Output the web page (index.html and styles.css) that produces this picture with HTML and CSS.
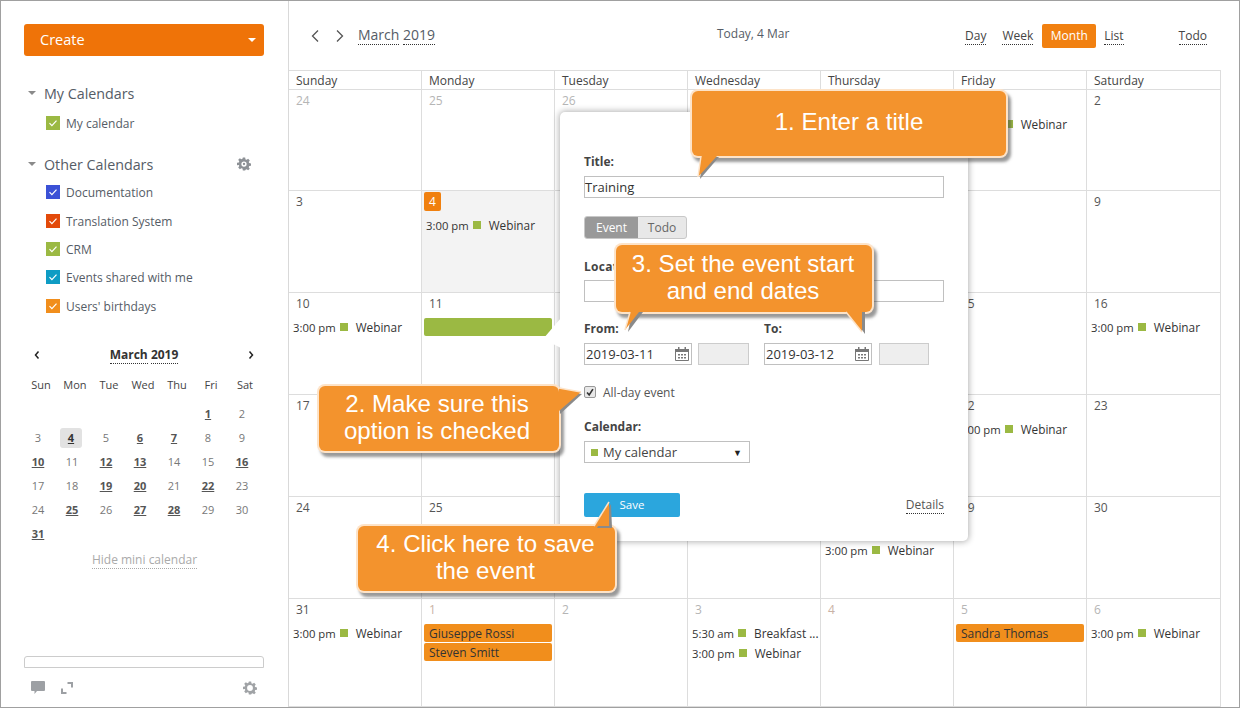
FILE: index.html
```html
<!DOCTYPE html>
<html lang="en">
<head>
<meta charset="utf-8">
<title>Calendar</title>
<link rel="stylesheet" href="styles.css">
</head>
<body>
<div class="app">
  <aside class="sidebar">
    <button class="create"><span>Create</span><i class="caret-white"></i></button>

    <div class="group-head first"><i class="caret"></i><span>My Calendars</span></div>
    <div class="cal-item first-item"><span class="check green"><svg viewBox="0 0 14 14"><path d="M3.5 7.2l2.4 2.4 4.6-5"/></svg></span>My calendar</div>

    <div class="group-head second"><i class="caret"></i><span>Other Calendars</span>
      <svg class="gear gear-top" viewBox="0 0 24 24"><path fill-rule="evenodd" d="M10 1h4l.6 3.1 1.9.8 2.6-1.8 2.8 2.8-1.8 2.6.8 1.9 3.1.6v4l-3.1.6-.8 1.9 1.8 2.6-2.8 2.8-2.6-1.8-1.9.8L14 23h-4l-.6-3.1-1.9-.8-2.6 1.8-2.8-2.8 1.8-2.6-.8-1.9L0 14v-4l3.1-.6.8-1.9L2.1 4.9l2.8-2.8 2.6 1.8 1.9-.8zM12 7.5a4.5 4.5 0 1 0 0 9 4.5 4.5 0 0 0 0-9zM12 10a2 2 0 1 1 0 4 2 2 0 0 1 0-4z"/></svg>
    </div>
    <div class="cal-item o1"><span class="check blue"><svg viewBox="0 0 14 14"><path d="M3.5 7.2l2.4 2.4 4.6-5"/></svg></span>Documentation</div>
    <div class="cal-item o2"><span class="check red"><svg viewBox="0 0 14 14"><path d="M3.5 7.2l2.4 2.4 4.6-5"/></svg></span>Translation System</div>
    <div class="cal-item o3"><span class="check green"><svg viewBox="0 0 14 14"><path d="M3.5 7.2l2.4 2.4 4.6-5"/></svg></span>CRM</div>
    <div class="cal-item o3"><span class="check teal"><svg viewBox="0 0 14 14"><path d="M3.5 7.2l2.4 2.4 4.6-5"/></svg></span>Events shared with me</div>
    <div class="cal-item o2"><span class="check orange"><svg viewBox="0 0 14 14"><path d="M3.5 7.2l2.4 2.4 4.6-5"/></svg></span>Users' birthdays</div>

    <div class="mini">
      <div class="mini-nav">
        <svg class="mini-arrow" viewBox="0 0 8 10"><path d="M5.5 1.5L2.5 5l3 3.5"/></svg>
        <div class="mini-title"><span>March</span> <span>2019</span></div>
        <svg class="mini-arrow" viewBox="0 0 8 10"><path d="M2.5 1.5l3 3.5-3 3.5"/></svg>
      </div>
      <div class="mini-dow"><span>Sun</span><span>Mon</span><span>Tue</span><span>Wed</span><span>Thu</span><span>Fri</span><span>Sat</span></div>
      <div class="mini-grid">
        <span></span><span></span><span></span><span></span><span></span><span class="b">1</span><span>2</span>
        <span>3</span><span class="b today">4</span><span>5</span><span class="b">6</span><span class="b">7</span><span>8</span><span>9</span>
        <span class="b">10</span><span>11</span><span class="b">12</span><span class="b">13</span><span>14</span><span>15</span><span class="b">16</span>
        <span>17</span><span>18</span><span class="b">19</span><span class="b">20</span><span>21</span><span class="b">22</span><span>23</span>
        <span>24</span><span class="b">25</span><span>26</span><span class="b">27</span><span class="b">28</span><span>29</span><span>30</span>
        <span class="b">31</span>
      </div>
      <div class="hide-mini"><span>Hide mini calendar</span></div>
    </div>

    <div class="side-bottom">
      <div class="side-box"></div>
      <div class="side-icons">
        <svg class="i-chat" viewBox="0 0 14 13"><path d="M1 0h12a1 1 0 0 1 1 1v8a1 1 0 0 1-1 1H6l-2.500 3V10H1a1 1 0 0 1-1-1V1a1 1 0 0 1 1-1z"/></svg>
        <svg class="i-expand" viewBox="0 0 12 12"><path d="M6.500 1H11V5.500M1 6.500V11H5.500"/></svg>
        <svg class="gear i-gear" viewBox="0 0 24 24"><path fill-rule="evenodd" d="M10 1h4l.6 3.1 1.9.8 2.6-1.8 2.8 2.8-1.8 2.6.8 1.9 3.1.6v4l-3.1.6-.8 1.9 1.8 2.6-2.800 2.800-2.600-1.800-1.900.8L14 23h-4l-.6-3.1-1.900-.8-2.600 1.800-2.800-2.800 1.800-2.600-.8-1.900L0 14v-4l3.100-.6.8-1.900L2.100 4.900l2.800-2.800 2.600 1.800 1.900-.8zM12 7a5 5 0 1 0 0 10 5 5 0 0 0 0-10z"/></svg>
      </div>
    </div>
  </aside>

  <main class="main">
    <header class="toolbar">
      <div class="tb-left">
        <svg class="nav-arrow" viewBox="0 0 10 14"><path d="M8 1.500L2.500 7 8 12.500"/></svg>
        <svg class="nav-arrow" viewBox="0 0 10 14"><path d="M2 1.500L7.500 7 2 12.500"/></svg>
        <div class="tb-title"><span>March</span> <span>2019</span></div>
      </div>
      <div class="tb-today">Today, 4 Mar</div>
      <nav class="tb-views">
        <a class="v-day">Day</a><a class="v-week">Week</a><a class="v-active">Month</a><a class="v-list">List</a><a class="v-todo">Todo</a>
      </nav>
    </header>

    <div class="month">
      <div class="dow">Sunday</div><div class="dow">Monday</div><div class="dow">Tuesday</div><div class="dow">Wednesday</div><div class="dow">Thursday</div><div class="dow">Friday</div><div class="dow">Saturday</div>

      <div class="cell"><div class="num off">24</div></div>
      <div class="cell"><div class="num off">25</div></div>
      <div class="cell"><div class="num off">26</div></div>
      <div class="cell"><div class="num off">27</div></div>
      <div class="cell"><div class="num off">28</div></div>
      <div class="cell"><div class="num">1</div><div class="ev"><span>3:00 pm</span><i></i><b>Webinar</b></div></div>
      <div class="cell"><div class="num">2</div></div>

      <div class="cell"><div class="num">3</div></div>
      <div class="cell cur"><div class="num today-num">4</div><div class="ev"><span>3:00 pm</span><i></i><b>Webinar</b></div></div>
      <div class="cell"><div class="num">5</div></div>
      <div class="cell"><div class="num">6</div></div>
      <div class="cell"><div class="num">7</div></div>
      <div class="cell"><div class="num">8</div></div>
      <div class="cell"><div class="num">9</div></div>

      <div class="cell"><div class="num">10</div><div class="ev"><span>3:00 pm</span><i></i><b>Webinar</b></div></div>
      <div class="cell"><div class="num">11</div><div class="bar green-bar"></div></div>
      <div class="cell"><div class="num">12</div></div>
      <div class="cell"><div class="num">13</div></div>
      <div class="cell"><div class="num">14</div></div>
      <div class="cell"><div class="num">15</div></div>
      <div class="cell"><div class="num">16</div><div class="ev"><span>3:00 pm</span><i></i><b>Webinar</b></div></div>

      <div class="cell"><div class="num">17</div></div>
      <div class="cell"><div class="num">18</div></div>
      <div class="cell"><div class="num">19</div></div>
      <div class="cell"><div class="num">20</div></div>
      <div class="cell"><div class="num">21</div></div>
      <div class="cell"><div class="num">22</div><div class="ev"><span>3:00 pm</span><i></i><b>Webinar</b></div></div>
      <div class="cell"><div class="num">23</div></div>

      <div class="cell"><div class="num">24</div></div>
      <div class="cell"><div class="num">25</div></div>
      <div class="cell"><div class="num">26</div></div>
      <div class="cell"><div class="num">27</div></div>
      <div class="cell"><div class="num">28</div><div class="spacer"></div><div class="ev"><span>3:00 pm</span><i></i><b>Webinar</b></div></div>
      <div class="cell"><div class="num">29</div></div>
      <div class="cell"><div class="num">30</div></div>

      <div class="cell"><div class="num">31</div><div class="ev"><span>3:00 pm</span><i></i><b>Webinar</b></div></div>
      <div class="cell"><div class="num off-warm">1</div><div class="bar orange-bar">Giuseppe Rossi</div><div class="bar orange-bar">Steven Smitt</div></div>
      <div class="cell"><div class="num off">2</div></div>
      <div class="cell"><div class="num off">3</div><div class="ev"><span>5:30 am</span><i></i><b>Breakfast ...</b></div><div class="ev ev2"><span>3:00 pm</span><i></i><b>Webinar</b></div></div>
      <div class="cell"><div class="num off-warm">4</div></div>
      <div class="cell"><div class="num off">5</div><div class="bar orange-bar">Sandra Thomas</div></div>
      <div class="cell"><div class="num off">6</div><div class="ev"><span>3:00 pm</span><i></i><b>Webinar</b></div></div>
    </div>
  </main>

  <section class="popup">
    <svg class="pop-arrow" viewBox="0 0 18 38"><path d="M18 0L0 21l18 9z"/></svg>
    <label class="lbl l-title">Title:</label>
    <div class="field">Training</div>
    <div class="toggle"><span class="on">Event</span><span>Todo</span></div>
    <label class="lbl l-loc">Location:</label>
    <div class="field"></div>
    <div class="dates">
      <div class="date-col">
        <label class="lbl">From:</label>
        <div class="date-row">
          <div class="date-input">2019-03-11<svg class="cal-ic" viewBox="0 0 14 14"><path class="o" d="M.5 2.500h13v11H.5z"/><path class="f" d="M0 2h14v3H0zM3 0h1.500v3H3zM9.500 0H11v3H9.500zM3 7h2v1.500H3zM6 7h2v1.500H6zM9 7h2v1.500H9zM3 10h2v1.500H3zM6 10h2v1.500H6zM9 10h2v1.500H9z"/></svg></div>
          <div class="time-input t1"></div>
        </div>
      </div>
      <div class="date-col">
        <label class="lbl">To:</label>
        <div class="date-row">
          <div class="date-input">2019-03-12<svg class="cal-ic" viewBox="0 0 14 14"><path class="o" d="M.5 2.500h13v11H.5z"/><path class="f" d="M0 2h14v3H0zM3 0h1.500v3H3zM9.500 0H11v3H9.500zM3 7h2v1.500H3zM6 7h2v1.500H6zM9 7h2v1.500H9zM3 10h2v1.500H3zM6 10h2v1.500H6zM9 10h2v1.500H9z"/></svg></div>
          <div class="time-input t2"></div>
        </div>
      </div>
    </div>
    <div class="allday"><span class="cb"><svg viewBox="0 0 12 12"><path d="M2.500 6.500L5 9.500l4.500-7"/></svg></span>All-day event</div>
    <label class="lbl l-cal">Calendar:</label>
    <div class="select"><i></i><span>My calendar</span><em>▼</em></div>
    <div class="pop-foot"><button class="save">Save</button><a class="details">Details</a></div>
  </section>

  <div class="callout c1">1. Enter a title
    <svg class="tail t-c1" viewBox="0 0 24 24"><path class="ts" d="M5 1L2 23 21 1z"/><path class="tf" d="M3 0L0 21 19 0z"/><path class="te" d="M3 0L0 21"/></svg>
  </div>
  <div class="callout c2">2. Make sure this<br>option is checked
    <svg class="tail t-c2" viewBox="0 0 26 28"><path class="ts" d="M0 5l23 3L1 28z"/><path class="tf" d="M0 2l22 4L0 25z"/><path class="te" d="M0 2l22 4"/></svg>
  </div>
  <div class="callout c3">3. Set the event start<br>and end dates
    <svg class="tail t-c3a" viewBox="0 0 18 22"><path class="ts" d="M7 0h11L3 20z"/><path class="tf" d="M5 0h9L0 18z"/><path class="te" d="M5 0L0 18"/></svg>
    <svg class="tail t-c3b" viewBox="0 0 22 24"><path class="ts" d="M4 0h16v22z"/><path class="tf" d="M1 0h16v20z"/><path class="te" d="M1 0l16 20"/></svg>
  </div>
  <div class="callout c4">4. Click here to save<br>the event
    <svg class="tail t-c4" viewBox="0 0 20 26"><path class="ts" d="M4 26L18 2l1 24z"/><path class="tf" d="M1 24L16 0v24z"/><path class="te" d="M1 24L16 0"/></svg>
  </div>
</div>
</body>
</html>
```

FILE: styles.css
```css
* { box-sizing: border-box; }
html, body { margin: 0; padding: 0; }
body { width: 1240px; height: 708px; overflow: hidden; background: #fff; font-family: "Open Sans", sans-serif; font-size: 12px; color: #333; }
.app { position: relative; display: flex; width: 1240px; height: 708px; border: 1px solid #a0a0a0; background: #fff; overflow: hidden; }

/* sidebar */
.sidebar { flex: 0 0 288px; height: 706px; display: flex; flex-direction: column; padding: 23px 23px 0; border-right: 1px solid #d9d9d9; }
.create { display: flex; align-items: center; justify-content: space-between; width: 240px; height: 32px; padding: 0 8px 2px 16px; border: 0; border-radius: 3px; background: #ef7308; color: #fff; font: 14.500px "Open Sans", sans-serif; }
.caret-white { width: 0; height: 0; border: 4px solid transparent; border-top-color: #fff; border-bottom: 0; margin-top: 2px; }
.group-head { display: flex; align-items: center; font-size: 14.300px; color: #555c66; height: 20px; position: relative; }
.group-head.first { margin-top: 27px; }
.group-head.second { margin-top: 24px; }
.caret { width: 0; height: 0; border: 4px solid transparent; border-top-color: #8a8a8a; border-bottom: 0; margin: 0 8px 0 4px; }
.gear { fill: #8d9196; }
.gear-top { position: absolute; left: 213px; top: 3px; width: 14px; height: 14px; }
.cal-item { display: flex; align-items: center; height: 14px; color: #555c66; font-size: 12px; margin-left: 22px; }
.first-item { margin-top: 13px; }
.o1 { margin-top: 11px; }
.o2 { margin-top: 15px; }
.o3 { margin-top: 14px; }
.check { flex: none; width: 14px; height: 14px; margin-right: 6px; display: block; }
.check svg { display: block; width: 14px; height: 14px; fill: none; stroke: #fff; stroke-width: 1.200; }
.green { background: #9bb943; }
.blue { background: #3b51d6; }
.red { background: #e34a0a; }
.teal { background: #0e9cc4; }
.orange { background: #f18e1c; }

.mini { margin-top: 33px; }
.mini-nav { display: flex; align-items: center; justify-content: space-between; height: 18px; padding: 0 10px 0 9px; }
.mini-arrow { width: 8px; height: 10px; fill: none; stroke: #222; stroke-width: 1.500; }
.mini-title { font-weight: 700; font-size: 12px; color: #333; line-height: 16px; }
.mini-title span { border-bottom: 1px dotted #333; display: inline-block; }
.mini-dow { display: grid; grid-template-columns: repeat(7, 34px); margin-top: 13px; height: 16px; font-size: 11px; line-height: 16px; color: #444; margin-left: 0; text-align: center; }
.mini-grid { display: grid; grid-template-columns: repeat(7, 34px); grid-auto-rows: 24px; margin-top: 9px; text-align: center; font-size: 11px; line-height: 24px; color: #777; margin-left: -3px; }
.mini-grid .b { font-weight: 700; color: #555; text-decoration: underline; }
.mini-grid .today { background: #e2e2e2; border-radius: 3px; width: 22px; height: 20px; line-height: 20px; margin: 2px 0 0 5px; color: #333; }
.hide-mini { text-align: center; margin-top: 5px; font-size: 12px; color: #aaa; line-height: 17px; }
.hide-mini span { display: inline-block; border-bottom: 1px dotted #aaa; }

.side-bottom { margin-top: auto; }
.side-box { width: 240px; height: 12px; border: 1px solid #ccc; border-radius: 3px 3px 0 0; }
.side-icons { display: flex; align-items: center; height: 39px; padding: 0 8px 0 7px; }
.side-icons svg { display: block; }
.i-chat { width: 14px; height: 13px; fill: #9da0a4; }
.i-expand { width: 12px; height: 12px; margin-left: 16px; fill: none; stroke: #9da0a4; stroke-width: 2; }
.i-gear { width: 14px; height: 14px; margin-left: auto; fill: #a0a3a6; }

/* toolbar */
.main { flex: 1; display: flex; flex-direction: column; height: 706px; min-width: 0; }
.toolbar { position: relative; height: 69px; flex: none; padding: 0 32px 0 21px; display: flex; align-items: center; justify-content: space-between; color: #555c66; }
.tb-left { display: flex; align-items: center; height: 24px; }
.nav-arrow { width: 10px; height: 14px; fill: none; stroke: #555; stroke-width: 1.300; margin-right: 15px; }
.tb-title { font-size: 14px; margin-left: -2px; line-height: 18px; }
.tb-title span { display: inline-block; border-bottom: 1px dotted #333; }
.tb-today { position: absolute; left: 428px; top: 23px; line-height: 20px; font-size: 12px; }
.tb-views { display: flex; align-items: center; height: 24px; margin-top: 1px; }
.tb-views a { color: #444; line-height: 16px; border-bottom: 1px dotted #333; display: block; }
.v-week { margin-left: 16px; }
.tb-views .v-active { margin-left: 9px; background: #f18010; color: #fff; border: 0; border-radius: 2px; padding: 0 8.500px; line-height: 24px; height: 24px; }
.v-list { margin-left: 8px; }
.v-todo { margin-left: 55px; }

/* month */
.month { display: grid; grid-template-columns: 132px repeat(5, 133px) 134px; grid-template-rows: 19px 101px 102px 102px 102px 102px 108px; width: 932px; border-top: 1px solid #ddd; border-right: 1px solid #ddd; height: 637px; }
.dow { border-left: 1px solid #ddd; border-bottom: 1px solid #ddd; padding: 2px 0 0 7px; line-height: 16px; color: #444; }
.dow:first-child, .cell:nth-child(7n+1) { border-left: 0; }
.cell { position: relative; border-left: 1px solid #ddd; border-bottom: 1px solid #ddd; padding-top: 2px; min-width: 0; }
.cell.cur { background: #f3f3f3; }
.num { padding-left: 7px; height: 17px; line-height: 17px; color: #555; font-size: 12px; }
.num.off { color: #b5b5b5; }
.num.off-warm { color: #c9b2a6; }
.num.today-num { width: 17px; height: 19px; line-height: 19px; padding: 0; margin: -1px 0 -1px 2px; text-align: center; background: #f0800f; color: #fff; border-radius: 2px; }
.ev { display: flex; align-items: center; height: 20px; margin-top: 5px; padding-left: 4px; color: #333; white-space: nowrap; font-size: 12px; }
.ev span { flex: none; font-size: 11.300px; }
.ev i { flex: none; width: 8px; height: 8px; background: #9bb943; margin: 0 8px 0 4px; }
.ev b { font-weight: 400; min-width: 0; font-size: 11.800px; }
.ev.ev2 { margin-top: 0; }
.spacer { height: 19px; }
.bar { height: 18px; margin: 0 2px 1px; border-radius: 2px; padding: 1px 0 0 5px; line-height: 17px; white-space: nowrap; color: #333; }
.orange-bar { background: #f18e1c; }
.green-bar { background: #9bb943; }
.cell > .bar:nth-child(2) { margin-top: 6px; }

/* popup */
.popup { position: absolute; left: 559px; top: 111px; width: 408px; height: 429px; padding: 42px 24px 0 24px; background: #fff; border-radius: 5px; box-shadow: 0 0 6px 1px rgba(0,0,0,.3); display: flex; flex-direction: column; }
.pop-arrow { position: absolute; left: -17px; top: 206px; width: 18px; height: 38px; fill: #fff; }
.lbl { display: block; font-weight: 700; color: #444; font-size: 12px; line-height: 16px; }
.l-title { margin-bottom: 6px; }
.field { width: 360px; height: 22px; border: 1px solid #c0c0c0; font-size: 13px; line-height: 20px; color: #333; flex: none; }
.toggle { display: flex; width: 103px; height: 23px; margin-top: 18px; border-radius: 3px; overflow: hidden; background: #e8e8e8; border: 1px solid #c8c8c8; line-height: 21px; flex: none; color: #666; }
.toggle span { flex: 1; text-align: center; }
.toggle .on { flex: 0 0 53px; background: #999; color: #fff; }
.l-loc { margin: 20px 0 5px; letter-spacing: .3px; }
.dates { display: flex; gap: 15px; margin-top: 19px; }
.date-col { width: 165px; }
.date-row { display: flex; margin-top: 6px; }
.date-input { position: relative; width: 108px; height: 22px; border: 1px solid #c0c0c0; font-size: 13px; line-height: 20px; padding-left: 1px; color: #333; }
.cal-ic { position: absolute; right: 2px; top: 3px; width: 14px; height: 14px; }
.cal-ic .o { fill: none; stroke: #777; }
.cal-ic .f { fill: #777; }
.time-input { height: 22px; background: #eee; border: 1px solid #ccc; }
.t1 { width: 51px; margin-left: 6px; }
.t2 { width: 50px; margin-left: 7px; }
.allday { display: flex; align-items: center; height: 14px; margin-top: 20px; color: #555; font-size: 12px; }
.cb { width: 12px; height: 12px; border: 1px solid #999; border-radius: 2px; background: #e8e8e8; margin-right: 7px; }
.cb svg { display: block; width: 10px; height: 10px; fill: none; stroke: #333; stroke-width: 2; }
.l-cal { margin-top: 20px; }
.select { display: flex; align-items: center; width: 166px; height: 22px; margin-top: 6px; border: 1px solid #c0c0c0; font-size: 13px; color: #444; }
.select i { width: 7px; height: 7px; background: #9bb943; margin: 0 5px 0 6px; }
.select span { flex: 1; }
.select em { font-style: normal; font-size: 9px; color: #222; margin-right: 7px; }
.pop-foot { display: flex; align-items: center; justify-content: space-between; margin-top: 30px; }
.save { width: 96px; height: 24px; border: 0; border-radius: 2px; padding: 0 0 2px; background: #2ba6dd; color: #fff; font: 11.500px "Open Sans", sans-serif; }
.details { color: #555; line-height: 16px; border-bottom: 1px dotted #333; }

/* callouts */
.callout { position: absolute; padding: 0 2px 4px 0; background: #f3932d; border-radius: 6px; color: #fff; font-family: "Liberation Sans", sans-serif; font-size: 24.100px; line-height: 27px; text-align: center; display: flex; align-items: center; justify-content: center; box-shadow: 0 0 0 2px #fde3c8, 3px 4px 3px 2px rgba(70,70,70,.55); }
.tail { position: absolute; overflow: visible; }
.ts { fill: #8a8a8a; }
.tf { fill: #f3932d; }
.te { fill: none; stroke: #fde3c8; stroke-width: 1.500; }
.c1 { left: 691px; top: 90px; width: 314px; height: 65px; padding-right: 0; }
.c2 { left: 318px; top: 385px; width: 240px; height: 65px; padding-right: 4px; }
.c3 { left: 615px; top: 244px; width: 256px; height: 67px; }
.c4 { left: 357px; top: 525px; width: 257px; height: 65px; }
.t-c1 { left: 6px; top: 65px; width: 24px; height: 24px; }
.t-c2 { left: 240px; top: 0; width: 26px; height: 28px; }
.t-c3a { left: 9px; top: 67px; width: 18px; height: 22px; }
.t-c3b { left: 229px; top: 67px; width: 22px; height: 24px; }
.t-c4 { left: 235px; top: -24px; width: 20px; height: 26px; }
```
